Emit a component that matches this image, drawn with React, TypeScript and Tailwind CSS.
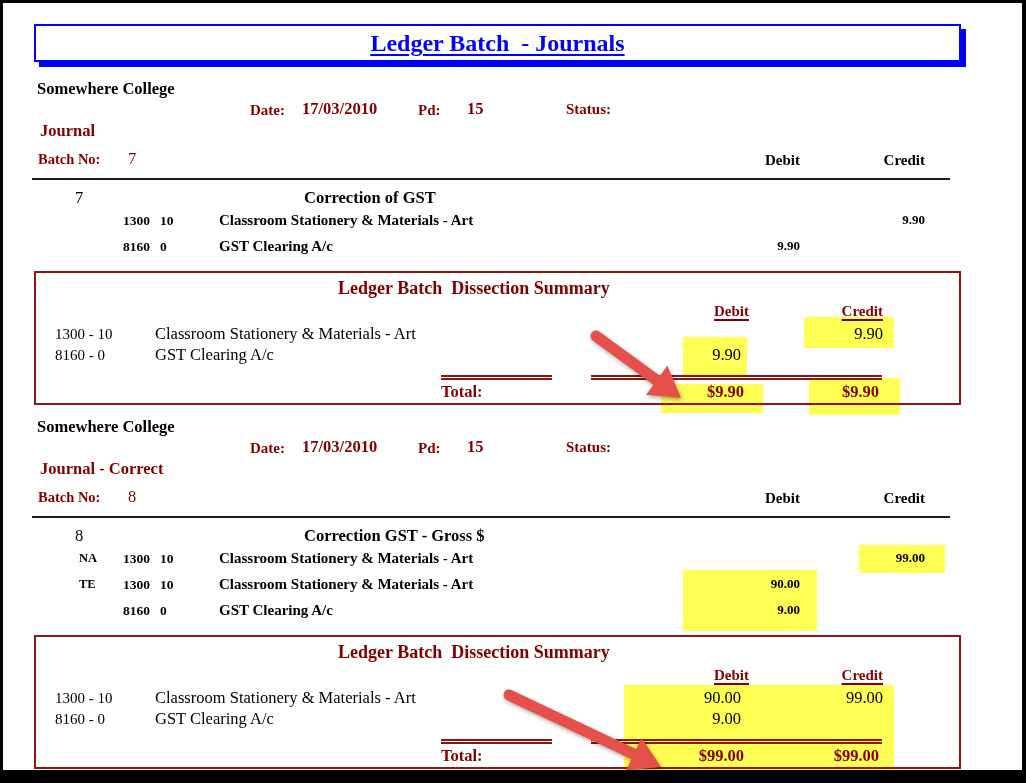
type Line = {
  tag: string;
  acct: string;
  sub: string;
  desc: string;
  debit: string;
  credit: string;
};

type SumLine = { code: string; desc: string; debit: string; credit: string };

type Batch = {
  journal: string;
  batch: string;
  title: string;
  lines: Line[];
  summary: SumLine[];
  totalDebit: string;
  totalCredit: string;
};

const STATIONERY = "Classroom Stationery & Materials - Art";

const batches: Batch[] = [
  {
    journal: "Journal",
    batch: "7",
    title: "Correction of GST",
    lines: [
      { tag: "", acct: "1300", sub: "10", desc: STATIONERY, debit: "", credit: "9.90" },
      { tag: "", acct: "8160", sub: "0", desc: "GST Clearing A/c", debit: "9.90", credit: "" },
    ],
    summary: [
      { code: "1300 - 10", desc: STATIONERY, debit: "", credit: "9.90" },
      { code: "8160 - 0", desc: "GST Clearing A/c", debit: "9.90", credit: "" },
    ],
    totalDebit: "$9.90",
    totalCredit: "$9.90",
  },
  {
    journal: "Journal - Correct",
    batch: "8",
    title: "Correction GST - Gross $",
    lines: [
      { tag: "NA", acct: "1300", sub: "10", desc: STATIONERY, debit: "", credit: "99.00" },
      { tag: "TE", acct: "1300", sub: "10", desc: STATIONERY, debit: "90.00", credit: "" },
      { tag: "", acct: "8160", sub: "0", desc: "GST Clearing A/c", debit: "9.00", credit: "" },
    ],
    summary: [
      { code: "1300 - 10", desc: STATIONERY, debit: "90.00", credit: "99.00" },
      { code: "8160 - 0", desc: "GST Clearing A/c", debit: "9.00", credit: "" },
    ],
    totalDebit: "$99.00",
    totalCredit: "$99.00",
  },
];

// highlight boxes (coords inside the white page)
const highlights = [
  { x: 801, y: 314, w: 90, h: 31 },
  { x: 680, y: 334, w: 64, h: 38 },
  { x: 658, y: 381, w: 102, h: 29 },
  { x: 806, y: 375, w: 91, h: 37 },
  { x: 856, y: 542, w: 86, h: 28 },
  { x: 680, y: 567, w: 134, h: 61 },
  { x: 621, y: 682, w: 270, h: 90 },
];

function Arrow({ tx, ty, px, py }: { tx: number; ty: number; px: number; py: number }) {
  const dx = px - tx;
  const dy = py - ty;
  const len = Math.hypot(dx, dy);
  const ux = dx / len;
  const uy = dy / len;
  const nx = -uy;
  const ny = ux;
  const bx = px - ux * 30;
  const by = py - uy * 30;
  const pts = `${px},${py} ${bx + nx * 18},${by + ny * 18} ${bx - nx * 18},${by - ny * 18}`;
  return (
    <g>
      <line
        x1={tx}
        y1={ty}
        x2={bx + ux * 2}
        y2={by + uy * 2}
        stroke="#e5504a"
        strokeWidth={11}
        strokeLinecap="round"
      />
      <polygon points={pts} fill="#e5504a" />
    </g>
  );
}

function Summary({ b }: { b: Batch }) {
  return (
    <div className="ml-[31px] w-[927px] h-[134px] border-2 border-[#8f1515]">
      <div className="mt-[2px] h-[26px] flex items-center pl-[302px] text-[18px] font-bold text-[#800000] whitespace-pre">
        Ledger Batch  Dissection Summary
      </div>
      <div className="h-[20px] flex items-center text-[15px] font-bold text-[#800000]">
        <span className="w-[713px] text-right">
          <span className="underline decoration-2 underline-offset-[3px]">Debit</span>
        </span>
        <span className="w-[134px] text-right">
          <span className="underline decoration-2 underline-offset-[3px]">Credit</span>
        </span>
      </div>
      <div className="mt-[1px]">
        {b.summary.map((s, i) => (
          <div key={i} className="h-[21px] flex items-baseline pl-[19px] text-black">
            <span className="w-[100px] text-[15px]">{s.code}</span>
            <span className="w-[486px] text-[16.5px]">{s.desc}</span>
            <span className="w-[100px] text-right text-[16.5px]">{s.debit}</span>
            <span className="w-[142px] text-right text-[16.5px]">{s.credit}</span>
          </div>
        ))}
      </div>
      <div className="mt-[11px] flex pl-[405px]">
        <div className="w-[111px] h-[5px] border-y-2 border-[#8f1515]" />
        <div className="ml-[39px] w-[291px] h-[5px] border-y-2 border-[#8f1515]" />
      </div>
      <div className="pt-[2px] h-[22px] flex items-center pl-[405px] text-[16.5px] font-bold text-[#800000]">
        <span className="w-[203px]">Total:</span>
        <span className="w-[100px] text-right">{b.totalDebit}</span>
        <span className="w-[135px] text-right">{b.totalCredit}</span>
      </div>
    </div>
  );
}

function Section({ b }: { b: Batch }) {
  return (
    <div>
      <div className="h-[20px] flex items-center pl-[34px] pt-[1px] text-[16.5px] font-bold text-black">
        Somewhere College
      </div>
      <div className="h-[22px] flex items-center pl-[247px] font-bold text-[#800000]">
        <span className="w-[52px] text-[15px]">Date:</span>
        <span className="w-[116px] text-[16.5px] -mt-[2px]">17/03/2010</span>
        <span className="w-[49px] text-[15px]">Pd:</span>
        <span className="w-[99px] text-[16.5px] -mt-[2px]">15</span>
        <span className="text-[15px] -mt-[2px]">Status:</span>
      </div>
      <div className="h-[20px] flex items-center pl-[37px] text-[16.5px] font-bold text-[#800000]">
        {b.journal}
      </div>
      <div className="mt-[9px] h-[20px] flex items-center pl-[35px]">
        <span className="w-[90px] text-[14.5px] font-bold text-[#800000]">Batch No:</span>
        <span className="w-[90px] text-[16.5px] text-[#800000] -mt-[2px]">{b.batch}</span>
        <span className="w-[582px] text-right text-[15px] font-bold text-black">Debit</span>
        <span className="w-[125px] text-right text-[15px] font-bold text-black">Credit</span>
      </div>
      <div className="mt-[8px] ml-[29px] w-[918px] h-[2px] bg-[#1c1c1c]" />
      <div className="mt-[8px] h-[20px] flex items-center pl-[72px] text-black">
        <span className="w-[229px] text-[16.5px]">{b.batch}</span>
        <span className="text-[16.5px] font-bold">{b.title}</span>
      </div>
      {b.lines.map((l, i) => (
        <div key={i} className="h-[26px] flex items-center pl-[76px] font-bold text-black">
          <span className="w-[44px] text-[12.5px] -mt-[2px]">{l.tag}</span>
          <span className="w-[37px] text-[13.5px]">{l.acct}</span>
          <span className="w-[59px] text-[13.5px]">{l.sub}</span>
          <span className="w-[481px] text-[15px] -mt-[2px]">{l.desc}</span>
          <span className="w-[100px] text-right text-[13px] -mt-[2px]">{l.debit}</span>
          <span className="w-[125px] text-right text-[13px] -mt-[2px]">{l.credit}</span>
        </div>
      ))}
      <div className="mt-[11px]">
        <Summary b={b} />
      </div>
    </div>
  );
}

export default function App() {
  return (
    <div className="w-[1026px] h-[783px] bg-black pt-[3px] pl-[3px] pr-[4px] pb-[13px] font-['Liberation_Serif',serif]">
      <div className="relative w-full h-full bg-white overflow-hidden">
        <div className="mt-[21px] ml-[31px] w-[927px] h-[38px] border-2 border-[#0000ff] shadow-[5px_5px_0_0_#0000ff] flex items-center justify-center">
          <span className="text-[24px] font-bold text-[#0000ff] underline decoration-[2px] underline-offset-[3px] whitespace-pre">
            Ledger Batch  - Journals
          </span>
        </div>
        <div className="mt-[17px]">
          <Section b={batches[0]} />
        </div>
        <div className="mt-[12px]">
          <Section b={batches[1]} />
        </div>

        {highlights.map((h, i) => (
          <div
            key={i}
            className="absolute bg-[#ffff54] mix-blend-multiply"
            style={{ left: h.x, top: h.y, width: h.w, height: h.h }}
          />
        ))}

        <svg
          className="absolute inset-0 drop-shadow-[1px_2px_2px_rgba(0,0,0,0.35)]"
          width={1019}
          height={767}
        >
          <Arrow tx={593} ty={333} px={678} py={395} />
          <Arrow tx={506} ty={692} px={658} py={764} />
        </svg>
      </div>
    </div>
  );
}
